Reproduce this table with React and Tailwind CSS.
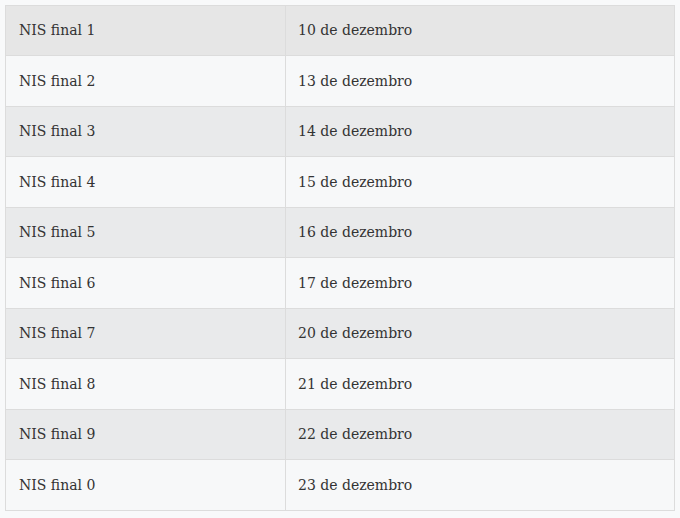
import React from 'react';

const rows = [
  ['NIS final 1', '10 de dezembro'],
  ['NIS final 2', '13 de dezembro'],
  ['NIS final 3', '14 de dezembro'],
  ['NIS final 4', '15 de dezembro'],
  ['NIS final 5', '16 de dezembro'],
  ['NIS final 6', '17 de dezembro'],
  ['NIS final 7', '20 de dezembro'],
  ['NIS final 8', '21 de dezembro'],
  ['NIS final 9', '22 de dezembro'],
  ['NIS final 0', '23 de dezembro'],
];

export default function App() {
  return (
    <div className="w-[680px] h-[518px] bg-[#f8f9fa] p-[5px] font-['DejaVu_Serif','Liberation_Serif',serif] text-[14px] text-[#333]">
      <div className="w-[670px] border-t border-x border-[#dcdcdc]">
        {rows.map((row, i) => (
          <div
            key={i}
            className={`flex border-b border-[#dcdcdc] ${
              i === 0 ? 'h-[50px] bg-[#e6e6e6]' : i % 2 === 0 ? 'h-[50px] bg-[#e9eaeb]' : 'h-[51px] bg-[#f7f8f9]'
            }`}
          >
            <div className="w-[280px] shrink-0 flex items-center pl-[13px] border-r border-[#dcdcdc]">{row[0]}</div>
            <div className="flex-1 flex items-center pl-[12px]">{row[1]}</div>
          </div>
        ))}
      </div>
    </div>
  );
}
